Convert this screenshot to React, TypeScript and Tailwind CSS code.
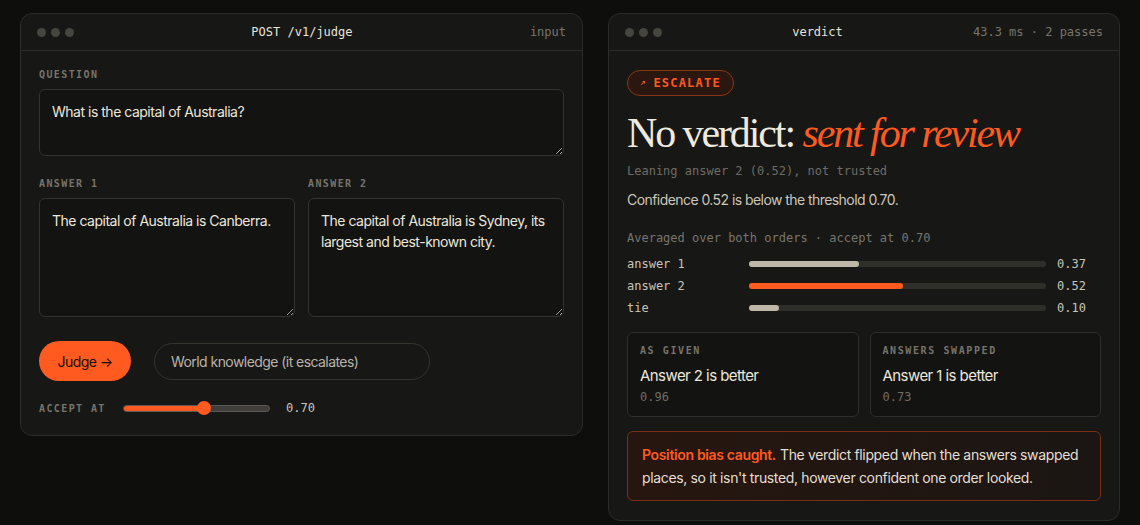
import React from "react";

const mono = "font-['DejaVu_Sans_Mono',monospace]";

interface WindowProps {
  title: string;
  meta: string;
  children: React.ReactNode;
}

const Window: React.FC<WindowProps> = ({ title, meta, children }) => {
  return (
    <section className="rounded-xl border border-[#2c2b27] bg-[#171715]">
      <header
        className={`${mono} flex h-[37px] items-center justify-between border-b border-[#2c2b27] px-4 text-[12px] tracking-normal`}
      >
        <div className="flex gap-[5px]">
          <span className="h-[9px] w-[9px] rounded-full bg-[#46453f]" />
          <span className="h-[9px] w-[9px] rounded-full bg-[#46453f]" />
          <span className="h-[9px] w-[9px] rounded-full bg-[#46453f]" />
        </div>
        <div className="text-[#e8e3d8]">{title}</div>
        <div className="text-[#78756c]">{meta}</div>
      </header>
      {children}
    </section>
  );
};

const FieldLabel: React.FC<{ children: React.ReactNode }> = ({ children }) => (
  <div
    className={`${mono} mb-[7px] text-[10px] font-bold leading-[14px] tracking-[0.14em] text-[#77746b] uppercase`}
  >
    {children}
  </div>
);

const Box = ({ value, h }: { value: string; h: string }) => (
  <textarea
    readOnly
    defaultValue={value}
    className={`${h} block w-full rounded-md border border-[#34332e] bg-[#131311] px-3 py-[11px] text-[14px] leading-[21px] tracking-[-0.035em] text-[#ece7dc] outline-none`}
  />
);

const bars = [
  { label: "answer 1", value: 0.37, color: "bg-[#bfb7a8]" },
  { label: "answer 2", value: 0.52, color: "bg-[#ff5a1f]" },
  { label: "tie", value: 0.1, color: "bg-[#bfb7a8]" },
];

const App: React.FC = () => {
  return (
    <div className="min-h-screen bg-[#0e0e0d] px-5 pt-[13px] font-['Inter',sans-serif] tracking-[-0.035em]">
      <div className="grid grid-cols-[563px_512px] items-start gap-[25px]">
        {/* input panel */}
        <Window title="POST /v1/judge" meta="input">
          <div className="px-[18px] pt-[17px] pb-[18px]">
            <FieldLabel>Question</FieldLabel>
            <Box value="What is the capital of Australia?" h="h-[67px]" />

            <div className="mt-[21px] grid grid-cols-2 gap-[13px]">
              <div>
                <FieldLabel>Answer 1</FieldLabel>
                <Box
                  value="The capital of Australia is Canberra."
                  h="h-[119px]"
                />
              </div>
              <div>
                <FieldLabel>Answer 2</FieldLabel>
                <Box
                  value="The capital of Australia is Sydney, its largest and best-known city."
                  h="h-[119px]"
                />
              </div>
            </div>

            <div className="mt-[24px] flex items-center gap-[23px]">
              <button className="h-[40px] w-[92px] rounded-full bg-[#ff5a1f] text-[14px] text-[#1a0f0a]">
                Judge →
              </button>
              <div className="flex h-[37px] w-[276px] items-center rounded-full border border-[#34332e] px-4 text-[14px] text-[#b8b3a8]">
                World knowledge (it escalates)
              </div>
            </div>

            <div className="mt-[18px] flex items-center">
              <span
                className={`${mono} w-[84px] text-[10px] font-bold tracking-[0.14em] text-[#77746b]`}
              >
                ACCEPT AT
              </span>
              <div className="relative h-[7px] w-[147px] rounded-full border border-[#5a5954] bg-[#3f3e3a]">
                <div className="h-full w-[55%] rounded-full bg-[#ff5a1f]" />
                <span className="absolute top-1/2 left-[55%] h-[14px] w-[14px] -translate-x-1/2 -translate-y-1/2 rounded-full bg-[#ff5a1f]" />
              </div>
              <span
                className={`${mono} ml-4 text-[12px] tracking-normal text-[#c9c4b8]`}
              >
                0.70
              </span>
            </div>
          </div>
        </Window>

        {/* verdict panel */}
        <Window title="verdict" meta="43.3 ms · 2 passes">
          <div className="px-[18px] pt-[16px] pb-[19px]">
            <span
              className={`${mono} inline-flex h-[26px] items-center gap-[8px] rounded-full border border-[#8a3515] bg-[#2a170f] px-3 text-[12px] font-bold tracking-[0.1em] text-[#ff5a1f]`}
            >
              <span className="text-[9px] tracking-normal">↗</span>ESCALATE
            </span>

            <h1 className="mt-[14px] font-['Liberation_Serif',serif] text-[42px] leading-[46px] tracking-[-0.05em] text-[#efeade]">
              No verdict: <em className="text-[#ff5a1f]">sent for review</em>
            </h1>
            <p
              className={`${mono} mt-[6px] text-[12px] tracking-normal text-[#6f6c64]`}
            >
              Leaning answer 2 (0.52), not trusted
            </p>
            <p className="mt-[9px] text-[14px] text-[#cbc6ba]">
              Confidence 0.52 is below the threshold 0.70.
            </p>

            <p
              className={`${mono} mt-[19px] text-[12px] tracking-normal text-[#78756c]`}
            >
              Averaged over both orders · accept at 0.70
            </p>
            <div className="mt-[6px] flex flex-col">
              {bars.map((bar) => (
                <div key={bar.label} className="flex h-[22px] items-center">
                  <span
                    className={`${mono} w-[122px] text-[12px] tracking-normal text-[#c9c4b8]`}
                  >
                    {bar.label}
                  </span>
                  <div className="h-[6px] w-[297px] rounded-full bg-[#2f2f2a]">
                    <div
                      className={`h-full rounded-full ${bar.color}`}
                      style={{ width: `${bar.value * 100}%` }}
                    />
                  </div>
                  <span
                    className={`${mono} ml-[11px] text-[12px] tracking-normal text-[#c9c4b8]`}
                  >
                    {bar.value.toFixed(2)}
                  </span>
                </div>
              ))}
            </div>

            <div className="mt-[13px] grid grid-cols-2 gap-[11px]">
              {[
                { label: "As given", text: "Answer 2 is better", score: "0.96" },
                { label: "Answers swapped", text: "Answer 1 is better", score: "0.73" },
              ].map((card) => (
                <div
                  key={card.label}
                  className="h-[85px] rounded-md border border-[#2f2e2a] bg-[#131311] px-3 pt-[10px]"
                >
                  <div
                    className={`${mono} text-[10px] font-bold tracking-[0.16em] text-[#77746b] uppercase`}
                  >
                    {card.label}
                  </div>
                  <div className="mt-[7px] text-[15px] text-[#ece7dc]">
                    {card.text}
                  </div>
                  <div
                    className={`${mono} mt-[1px] text-[12px] tracking-normal text-[#6f6c64]`}
                  >
                    {card.score}
                  </div>
                </div>
              ))}
            </div>

            <div className="mt-[14px] rounded-md border border-[#7c2f13] bg-gradient-to-r from-[#27160f] to-[#1b1613] px-[14px] py-[11px] text-[14px] leading-[23px] tracking-[-0.025em] text-[#e4dfd3]">
              <span className="mr-[4px] font-semibold text-[#ff5a1f]">
                Position bias caught.
              </span>
              The verdict flipped when the answers swapped places, so it isn't
              trusted, however confident one order looked.
            </div>
          </div>
        </Window>
      </div>
    </div>
  );
};

export default App;
